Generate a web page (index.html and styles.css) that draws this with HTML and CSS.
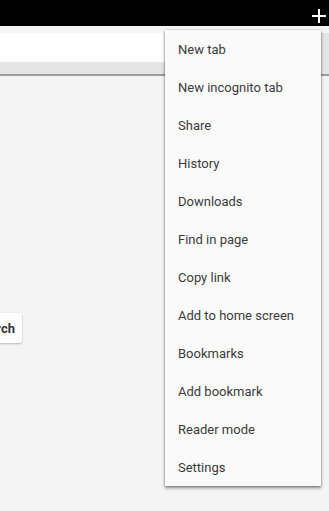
FILE: index.html
```
<!DOCTYPE html>
<html lang="en">
<head>
    <meta charset="UTF-8">
    <meta name="viewport" content="width=device-width, initial-scale=1.0">
    <title>Browser</title>
    <link rel="stylesheet" href="styles.css">
</head>
<body>

<div class="tabstrip">
    <svg class="new-tab" width="14" height="14" viewBox="0 0 14 14">
        <path d="M7 0v14M0 7h14" stroke="#fff" stroke-width="2"/>
    </svg>
</div>

<div class="toolbar">
    <div class="omnibox"></div>
</div>

<div class="page">
    <button class="search-btn">Search</button>
</div>

<!-- Overflow menu -->
<ul class="menu">
    <li>New tab</li>
    <li>New incognito tab</li>
    <li>Share</li>
    <li>History</li>
    <li>Downloads</li>
    <li>Find in page</li>
    <li>Copy link</li>
    <li>Add to home screen</li>
    <li>Bookmarks</li>
    <li>Add bookmark</li>
    <li>Reader mode</li>
    <li>Settings</li>
</ul>

</body>
</html>
```

FILE: styles.css
```
html, body { margin: 0; height: 100%; }
body { font-family: Roboto, "Noto Sans", sans-serif; background: #f4f4f4; color: #333; overflow: hidden; }
.tabstrip { height: 26px; background: #000; display: flex; justify-content: flex-end; align-items: center; padding-right: 3px; }
.new-tab { display: block; margin-top: 6px; }
.toolbar { height: 41px; background: #e4e4e4; border-bottom: 2px solid #9a9a9a; }
.omnibox { background: #fff; height: 29px; margin-top: 7px; width: 170px; }
.page { padding-top: 243px; }
.search-btn { display: block; margin: -6px 0 0 -30px; width: 52px; height: 30px; border: none; border-radius: 2px; background: #fff; box-shadow: 0 1px 2px rgba(0,0,0,0.25); font-family: Roboto, sans-serif; font-weight: bold; font-size: 13px; color: #333; text-align: right; padding: 0 7px 0 0; }
.menu { position: absolute; top: 30px; left: 165px; width: 156px; margin: 0; padding: 0; list-style: none; background: #fafafa; box-shadow: 0 2px 3px rgba(0,0,0,0.45), 0 0 2px rgba(0,0,0,0.25); }
.menu li { height: 38px; line-height: 38px; padding: 1px 0 0 13px; box-sizing: border-box; font-size: 13px; color: #3a3a3a; }
```
